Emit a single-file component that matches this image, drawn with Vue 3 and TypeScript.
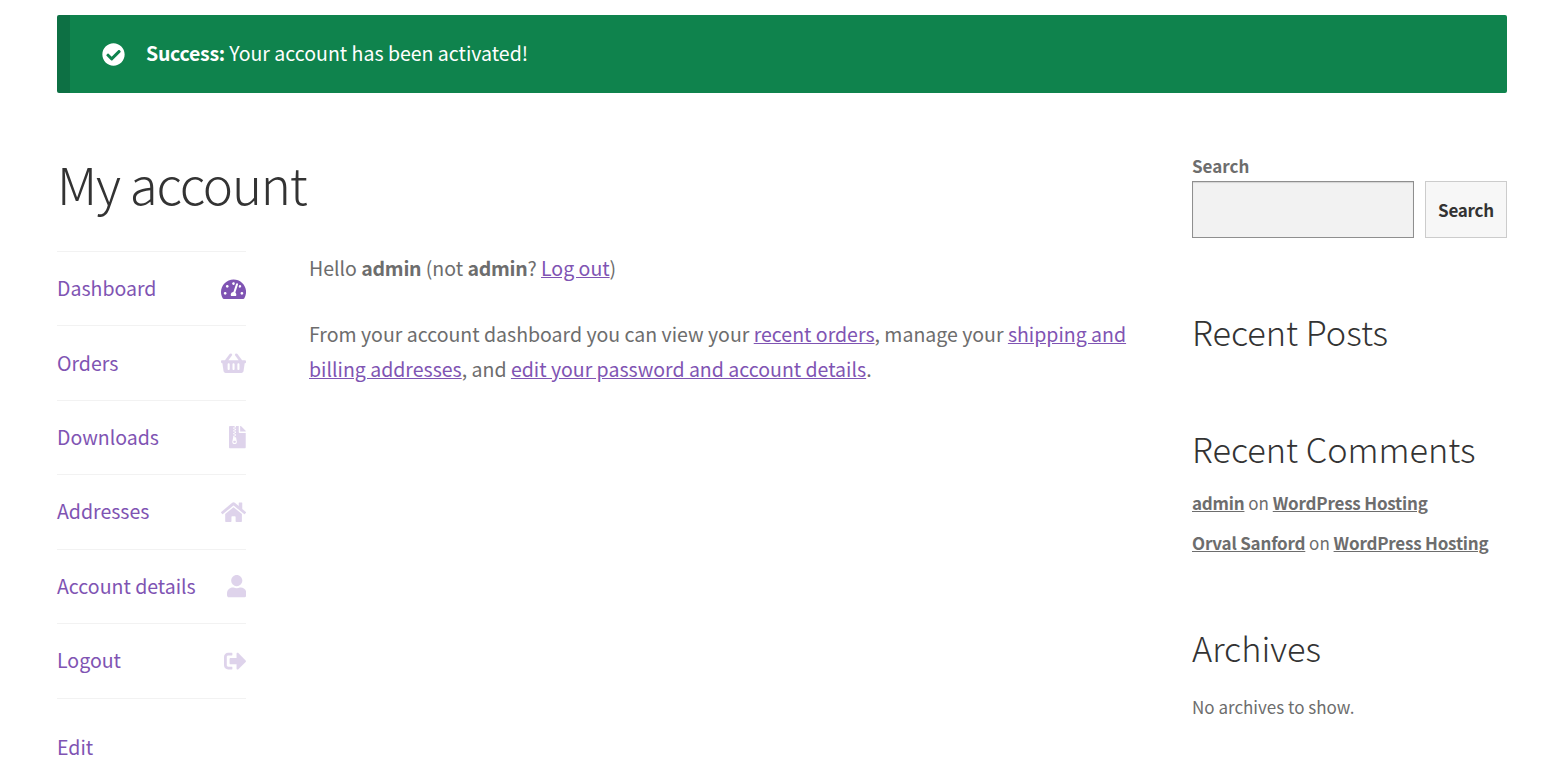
<script setup lang="ts">
interface MenuItem {
  label: string
  width: number
  path: string
  active?: boolean
}

interface Comment {
  author: string
  post: string
}

const menu: MenuItem[] = [
  {
    label: 'Dashboard',
    width: 576,
    active: true,
    path: 'M288 32C128.94 32 0 160.94 0 320c0 52.8 14.25 102.26 39.06 144.8 5.61 9.62 16.3 15.2 27.44 15.2h443c11.14 0 21.83-5.58 27.44-15.2C561.75 422.26 576 372.8 576 320c0-159.06-128.94-288-288-288zm0 64c14.71 0 26.58 10.13 30.32 23.65-1.11 2.26-2.64 4.23-3.45 6.67l-9.22 27.67c-5.13 3.49-10.97 6.01-17.64 6.01-17.67 0-32-14.33-32-32S270.33 96 288 96zM96 384c-17.67 0-32-14.33-32-32s14.33-32 32-32 32 14.33 32 32-14.33 32-32 32zm48-160c-17.67 0-32-14.33-32-32s14.33-32 32-32 32 14.33 32 32-14.33 32-32 32zm246.77-72.41l-61.33 184C343.13 347.33 352 364.54 352 384c0 11.72-3.38 22.55-8.88 32H232.88c-5.5-9.45-8.88-20.28-8.88-32 0-33.94 26.5-61.43 59.9-63.59l61.34-184.01c4.17-12.56 17.73-19.45 30.36-15.17 12.57 4.19 19.35 17.79 15.17 30.36zm14.66 57.2l15.52-46.55c3.47-1.29 7.13-2.23 11.05-2.23 17.67 0 32 14.33 32 32s-14.33 32-32 32c-11.38-.01-20.89-6.28-26.57-15.22zM480 384c-17.67 0-32-14.33-32-32s14.33-32 32-32 32 14.33 32 32-14.33 32-32 32z'
  },
  {
    label: 'Orders',
    width: 576,
    path: 'M576 216v16c0 13.255-10.745 24-24 24h-8l-26.113 182.788C514.509 462.435 494.257 480 470.37 480H105.63c-23.887 0-44.139-17.565-47.518-41.212L32 256h-8c-13.255 0-24-10.745-24-24v-16c0-13.255 10.745-24 24-24h67.341l106.78-146.821c10.395-14.292 30.407-17.453 44.701-7.058 14.293 10.395 17.453 30.408 7.058 44.701L170.477 192h235.046L326.12 82.821c-10.395-14.292-7.234-34.306 7.059-44.701 14.291-10.395 34.306-7.235 44.701 7.058L484.659 192H552c13.255 0 24 10.745 24 24zM312 392V280c0-13.255-10.745-24-24-24s-24 10.745-24 24v112c0 13.255 10.745 24 24 24s24-10.745 24-24zm112 0V280c0-13.255-10.745-24-24-24s-24 10.745-24 24v112c0 13.255 10.745 24 24 24s24-10.745 24-24zm-224 0V280c0-13.255-10.745-24-24-24s-24 10.745-24 24v112c0 13.255 10.745 24 24 24s24-10.745 24-24z'
  },
  {
    label: 'Downloads',
    width: 384,
    path: 'M377 105L279.1 7c-4.5-4.5-10.6-7-17-7H256v128h128v-6.1c0-6.3-2.5-12.4-7-16.9zM128.4 336c-17.9 0-32.4 12.1-32.4 27 0 15 14.6 27 32.5 27s32.4-12.1 32.4-27-14.6-27-32.5-27zM224 136V0h-63.6v32h-32V0H24C10.7 0 0 10.7 0 24v464c0 13.3 10.7 24 24 24h336c13.3 0 24-10.7 24-24V160H248c-13.2 0-24-10.8-24-24zM95.9 32h32v32h-32zm32.3 384c-33.2 0-58-30.4-51.4-62.9L96.4 256v-32h32v-32h-32v-32h32v-32h-32V96h32V64h32v32h-32v32h32v32h-32v32h32v32h-32v32h22.1c5.7 0 10.7 4.1 11.8 9.7l17.3 87.7c6.4 32.4-18.4 62.6-51.4 62.6z'
  },
  {
    label: 'Addresses',
    width: 576,
    path: 'M280.37 148.26L96 300.11V464a16 16 0 0 0 16 16l112.06-.29a16 16 0 0 0 15.92-16V368a16 16 0 0 1 16-16h64a16 16 0 0 1 16 16v95.64a16 16 0 0 0 16 16.05L464 480a16 16 0 0 0 16-16V300L295.67 148.26a12.19 12.19 0 0 0-15.3 0zM571.6 251.47L488 182.56V44.05a12 12 0 0 0-12-12h-56a12 12 0 0 0-12 12v72.61L318.47 43a48 48 0 0 0-61 0L4.34 251.47a12 12 0 0 0-1.6 16.9l25.5 31A12 12 0 0 0 45.15 301l235.22-193.74a12.19 12.19 0 0 1 15.3 0L530.9 301a12 12 0 0 0 16.9-1.6l25.5-31a12 12 0 0 0-1.7-16.93z'
  },
  {
    label: 'Account details',
    width: 448,
    path: 'M224 256c70.7 0 128-57.3 128-128S294.7 0 224 0 96 57.3 96 128s57.3 128 128 128zm89.6 32h-16.7c-22.2 10.2-46.9 16-72.9 16s-50.6-5.8-72.9-16h-16.7C60.2 288 0 348.2 0 422.4V464c0 26.5 21.5 48 48 48h352c26.5 0 48-21.5 48-48v-41.6c0-74.2-60.2-134.4-134.4-134.4z'
  },
  {
    label: 'Logout',
    width: 512,
    path: 'M497 273L329 441c-15 15-41 4.5-41-17v-96H152c-13.3 0-24-10.7-24-24v-96c0-13.3 10.7-24 24-24h136V88c0-21.4 25.9-32 41-17l168 168c9.3 9.4 9.3 24.6 0 34zM192 436v-40c0-6.6-5.4-12-12-12H96c-17.7 0-32-14.3-32-32V160c0-17.7 14.3-32 32-32h84c6.6 0 12-5.4 12-12V76c0-6.6-5.4-12-12-12H96c-53 0-96 43-96 96v192c0 53 43 96 96 96h84c6.6 0 12-5.4 12-12z'
  }
]

const comments: Comment[] = [
  { author: 'admin', post: 'WordPress Hosting' },
  { author: 'Orval Sanford', post: 'WordPress Hosting' }
]
</script>

<template>
  <div class="page">
    <div class="notice" role="alert">
      <svg class="notice-icon" viewBox="0 0 512 512" aria-hidden="true">
        <path d="M504 256c0 136.967-111.033 248-248 248S8 392.967 8 256 119.033 8 256 8s248 111.033 248 248zM227.314 387.314l184-184c6.248-6.248 6.248-16.379 0-22.627l-22.627-22.627c-6.248-6.248-16.379-6.249-22.628 0L216 308.118l-70.059-70.059c-6.248-6.248-16.379-6.248-22.628 0l-22.627 22.627c-6.248 6.248-6.248 16.379 0 22.627l104 104c6.249 6.249 16.379 6.249 22.628.001z" />
      </svg>
      <p class="notice-text"><strong>Success:</strong> Your account has been activated!</p>
    </div>

    <div class="columns">
      <main class="primary">
        <h1>My account</h1>
        <div class="account">
          <nav class="account-nav">
            <ul>
              <li v-for="item in menu" :key="item.label" :class="{ active: item.active }">
                <a>
                  <span>{{ item.label }}</span>
                  <svg :viewBox="`0 0 ${item.width} 512`" aria-hidden="true"><path :d="item.path" /></svg>
                </a>
              </li>
            </ul>
            <a class="edit">Edit</a>
          </nav>
          <div class="account-content">
            <p>Hello <strong>admin</strong> (not <strong>admin</strong>? <a>Log out</a>)</p>
            <p>From your account dashboard you can view your <a>recent orders</a>, manage your <a>shipping and billing addresses</a>, and <a>edit your password and account details</a>.</p>
          </div>
        </div>
      </main>

      <aside class="sidebar">
        <form class="search" @submit.prevent>
          <label for="site-search">Search</label>
          <div class="search-row">
            <input id="site-search" type="search" />
            <button type="submit">Search</button>
          </div>
        </form>
        <section class="posts">
          <h2>Recent Posts</h2>
        </section>
        <section class="comments">
          <h2>Recent Comments</h2>
          <p v-for="comment in comments" :key="comment.author"><a>{{ comment.author }}</a> on <a>{{ comment.post }}</a></p>
        </section>
        <section class="archives">
          <h2>Archives</h2>
          <p>No archives to show.</p>
        </section>
      </aside>
    </div>
  </div>
</template>

<style>
body {
  margin: 0;
  background: #fff;
  overflow: hidden;
}
</style>

<style scoped>
.page {
  box-sizing: border-box;
  height: 771px;
  padding: 15px 55px 0 57px;
  overflow: hidden;
  color: #6d6d6d;
  font: 400 19.52px/35px "Noto Sans CJK SC", "Open Sans", sans-serif;
}

p, h1, h2, ul {
  margin: 0;
  padding: 0;
}

h1, h2 {
  color: #333;
  font-weight: 300;
}

strong {
  font-weight: 700;
  letter-spacing: -0.27px;
}

.notice {
  display: flex;
  align-items: center;
  box-sizing: border-box;
  height: 78px;
  padding-left: 32px;
  border-left: 13px solid #0d7044;
  border-radius: 2px;
  background: #0f834d;
  color: #fff;
}

.notice-icon {
  width: 23px;
  height: 23px;
  margin-top: 1px;
  fill: currentColor;
}

.notice-text {
  margin: 0 0 3px 21px;
}

.columns {
  display: flex;
  justify-content: space-between;
}

.primary {
  width: 1074px;
}

h1 {
  padding-top: 56px;
  font-size: 51px;
  line-height: 68px;
  letter-spacing: -1.2px;
}

.account {
  display: flex;
  gap: 63px;
  margin-top: 34px;
}

.account-nav {
  width: 189px;
}

ul {
  border-top: 1px solid #f2f2f2;
  list-style: none;
}

li {
  box-sizing: border-box;
  height: 74.45px;
  border-bottom: 1px solid #f2f2f2;
}

li a {
  display: flex;
  align-items: center;
  justify-content: space-between;
  height: 100%;
}

li span {
  margin-bottom: 2.2px;
}

li svg {
  height: 22.3px;
  fill: currentColor;
  opacity: 0.25;
}

li.active svg {
  opacity: 1;
}

a {
  color: #7f54b3;
}

.edit {
  display: block;
  margin-top: 30px;
}

.account-content {
  flex: 1;
  margin-top: -1px;
}

.account-content p {
  margin-bottom: 31px;
}

.account-content a {
  text-decoration: underline;
}

.sidebar {
  width: 315px;
  padding-top: 58px;
  font-size: 17px;
  line-height: 30px;
}

label {
  display: block;
  font-weight: 700;
}

.search-row {
  display: flex;
  gap: 11px;
  height: 57px;
}

input {
  box-sizing: border-box;
  width: 222px;
  border: 1px solid #8f8f8f;
  border-radius: 0;
  background: #f2f2f2;
  box-shadow: inset 0 1px 1px rgba(0, 0, 0, 0.125);
}

button {
  flex: 1;
  padding: 0;
  border: 1px solid #ccc;
  background: #f7f7f7;
  color: #333;
  font: inherit;
  font-weight: 700;
  letter-spacing: -0.25px;
}

h2 {
  font-size: 34.3px;
  line-height: 46px;
}

.posts {
  margin-top: 70px;
}

.comments {
  margin-top: 71px;
}

.comments h2 {
  margin-bottom: 17px;
}

.comments p + p {
  margin-top: 10px;
}

.comments a {
  color: #6d6d6d;
  font-weight: 700;
  letter-spacing: -0.2px;
  text-decoration: underline;
}

.archives {
  margin-top: 66px;
}

.archives p {
  margin-top: 22px;
}
</style>
